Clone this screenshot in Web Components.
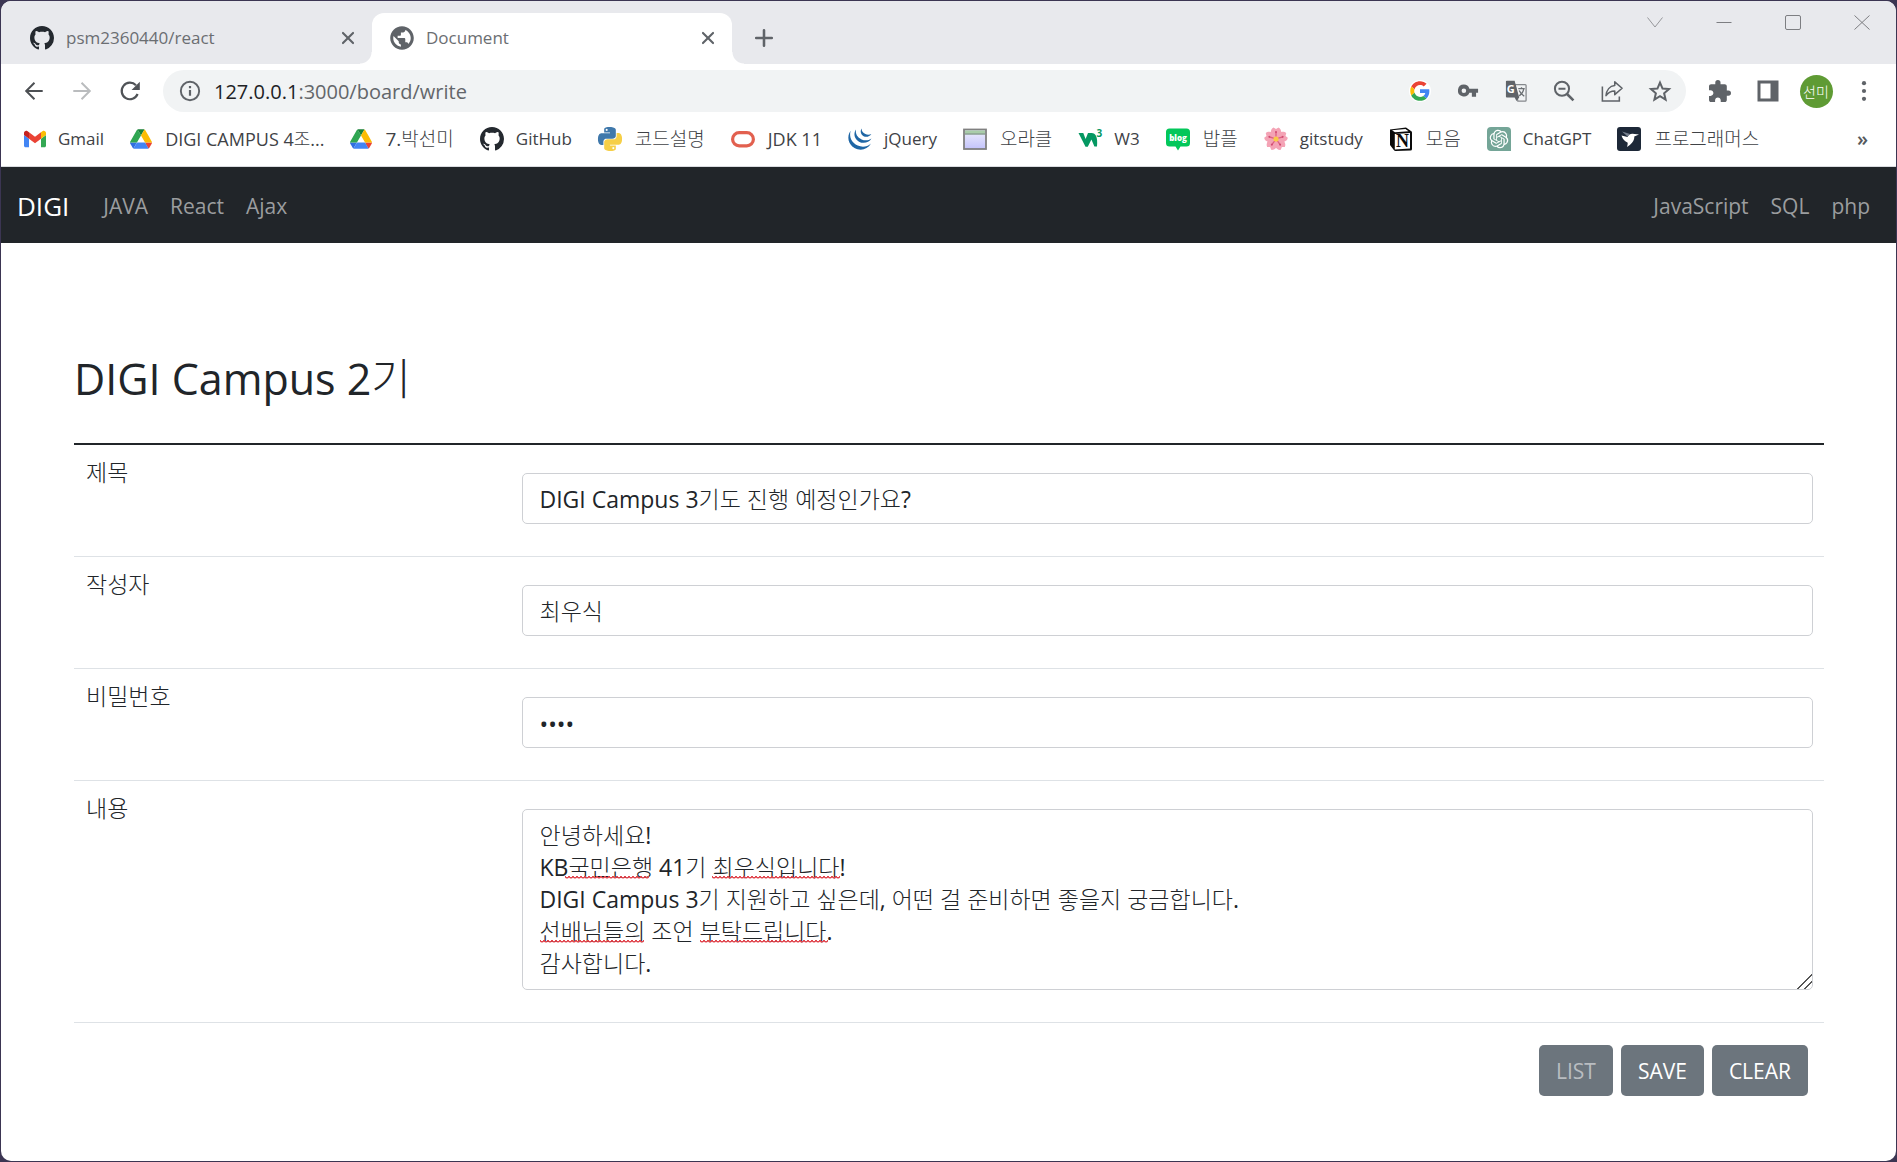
<!DOCTYPE html>
<html lang="ko">
<head>
<meta charset="utf-8">
<title>Document</title>
<style>
  html { height: 100%; background: #3b3552; }
  body {
    margin: 0; min-height: 100%; display: flex; box-sizing: border-box; padding: 1px;
    font-family: "Open Sans", "Noto Sans CJK KR Light", "Noto Sans CJK KR", sans-serif; color: #212529;
  }
</style>
</head>
<body>
<browser-window></browser-window>

<script>
const ICONS = {
  github: ['0 0 16 16', '<path fill="#24292f" d="M8 0C3.58 0 0 3.58 0 8c0 3.54 2.29 6.53 5.47 7.59.4.07.55-.17.55-.38 0-.19-.01-.82-.01-1.49-2.01.37-2.53-.49-2.69-.94-.09-.23-.48-.94-.82-1.13-.28-.15-.68-.52-.01-.53.63-.01 1.08.58 1.23.82.72 1.21 1.87.87 2.33.66.07-.52.28-.87.51-1.07-1.78-.2-3.64-.89-3.64-3.95 0-.87.31-1.59.82-2.15-.08-.2-.36-1.02.08-2.12 0 0 .67-.21 2.2.82.64-.18 1.32-.27 2-.27.68 0 1.36.09 2 .27 1.53-1.04 2.2-.82 2.2-.82.44 1.1.16 1.92.08 2.12.51.56.82 1.27.82 2.15 0 3.07-1.87 3.75-3.65 3.95.29.25.54.73.54 1.48 0 1.07-.01 1.93-.01 2.2 0 .21.15.46.55.38A8.013 8.013 0 0016 8c0-4.42-3.58-8-8-8z"/>'],
  globe: ['1 1 22 22', '<path fill="#5f6368" d="M12 1.200C6 1.200 1.200 6 1.200 12S6 22.800 12 22.800 22.800 18 22.800 12 18 1.200 12 1.200zm-1 18.730c-3.950-.490-7-3.850-7-7.930 0-.620.080-1.210.210-1.790L9 15v1c0 1.100.900 2 2 2v1.930zm6.900-2.540c-.260-.810-1-1.390-1.900-1.390h-1v-3c0-.550-.450-1-1-1H8v-2h2c.550 0 1-.450 1-1V7h2c1.100 0 2-.900 2-2v-.410c2.930 1.190 5 4.060 5 7.410 0 2.080-.800 3.970-2.100 5.390z"/>'],
  close: ['0 0 24 24', '<path stroke="#5f6368" stroke-width="2.300" stroke-linecap="round" d="M6.500 6.500l11 11m0-11l-11 11"/>'],
  plus: ['0 0 24 24', '<path stroke="#5f6368" stroke-width="2.800" stroke-linecap="round" d="M12 3.500v17M3.500 12h17"/>'],
  wdown: ['0 0 24 24', '<path fill="none" stroke="#96979b" d="M4.500 7.500l7.500 9.500 7.500-9.500"/>'],
  wmin: ['0 0 24 24', '<path stroke="#7d7e82" d="M4.500 12.500h15"/>'],
  wmax: ['0 0 24 24', '<rect x="4.500" y="5.500" width="15" height="14" rx="1.500" fill="none" stroke="#7d7e82"/>'],
  wclose: ['0 0 24 24', '<path stroke="#7d7e82" d="M4.500 5.500l15 14m0-14l-15 14"/>'],
  back: ['0 0 24 24', '<path fill="none" stroke="#4d5054" stroke-width="2.200" d="M21.500 12H3.500M12.500 3l-9 9 9 9"/>'],
  forward: ['0 0 24 24', '<path fill="none" stroke="#babcbe" stroke-width="2.200" d="M2.500 12h18M11.500 3l9 9-9 9"/>'],
  reload: ['0 0 24 24', '<path fill="none" stroke="#505357" stroke-width="2.400" d="M20.300 15.300A9 9 0 1 1 18.500 5.800"/><path fill="#505357" d="M22.700 2v9h-9z"/>'],
  info: ['0 0 24 24', '<circle cx="12" cy="12" r="10" fill="none" stroke="#5f6368" stroke-width="2.100"/><path stroke="#5f6368" stroke-width="2.400" d="M12 10.800v6.500M12 6.600v2.400"/>'],
  google: ['-3 -3 54 54', '<circle cx="24" cy="24" r="27" fill="#fff"/><path fill="#EA4335" d="M24 9.500c3.540 0 6.710 1.220 9.210 3.600l6.850-6.850C35.900 2.380 30.470 0 24 0 14.620 0 6.510 5.380 2.560 13.220l7.980 6.190C12.430 13.720 17.740 9.500 24 9.500z"/><path fill="#4285F4" d="M46.980 24.550c0-1.570-.150-3.090-.380-4.550H24v9.020h12.940c-.580 2.960-2.260 5.480-4.780 7.180l7.730 6c4.510-4.180 7.090-10.360 7.090-17.650z"/><path fill="#FBBC05" d="M10.530 28.590c-.480-1.450-.760-2.990-.760-4.590s.270-3.140.760-4.590l-7.980-6.190C.920 16.460 0 20.120 0 24c0 3.880.920 7.540 2.560 10.780l7.970-6.190z"/><path fill="#34A853" d="M24 48c6.480 0 11.930-2.130 15.890-5.810l-7.730-6c-2.150 1.450-4.920 2.300-8.160 2.300-6.260 0-11.570-4.220-13.470-9.910l-7.980 6.190C6.510 42.620 14.620 48 24 48z"/>'],
  key: ['0 0 24 24', '<path fill="#5f6368" fill-rule="evenodd" d="M7.500 5a6.500 6.500 0 1 0 6 9h2.700v4.200h4.600V14H23V9.500h-9.500A6.500 6.500 0 0 0 7.500 5zm0 4.200a2.500 2.500 0 1 1 0 5 2.500 2.500 0 0 1 0-5z"/>'],
  translate: ['0 0 24 24', '<path fill="#f1f3f4" stroke="#85888c" stroke-width="1.400" d="M11 5h11a1 1 0 0 1 1 1v16a1 1 0 0 1-1 1h-8z"/><path fill="#5f6368" d="M2 .700h8.500L15.500 19H2a1 1 0 0 1-1-1V1.700a1 1 0 0 1 1-1zM10.500 19h5l-3 4z"/><text x="2" y="14" fill="#fff" font-family="Open Sans" font-weight="700" font-size="12">G</text><path fill="none" stroke="#6b6f73" stroke-width="1.400" d="M14.500 9.500h7M18 8v1.500M20.500 9.500c-.500 3.500-2.500 6-5 7.800M15.500 11.500c1 2.500 3 4.500 5.500 6.300"/>'],
  zoomout: ['0 0 24 24', '<circle cx="9.800" cy="9.500" r="7.700" fill="none" stroke="#5f6368" stroke-width="2.200"/><path stroke="#5f6368" stroke-width="2.200" d="M6 9.500h7.600"/><path stroke="#5f6368" stroke-width="2.800" d="M15.300 15.300l7 7"/>'],
  share: ['0 0 24 24', '<path fill="none" stroke="#5f6368" stroke-width="1.700" d="M1.500 7v16h18.500v-5"/><path fill="none" stroke="#5f6368" stroke-width="1.700" stroke-linejoin="round" d="M15 2l8 7-8 7v-4c-4.500 0-7 1.500-9.500 5C6 11 9.500 6.500 15 6z"/>'],
  star: ['0 0 24 24', '<path fill="none" stroke="#5f6368" stroke-width="2.200" d="M12 2.800l2.800 6.500 7 .600-5.300 4.600 1.600 6.900-6.100-3.700-6.100 3.700 1.600-6.900L2.200 9.900l7-.600z"/>'],
  puzzle: ['2 1 21 21', '<path fill="#5f6368" d="M20.500 11H19V7c0-1.100-.900-2-2-2h-4V3.500a2.500 2.500 0 0 0-5 0V5H4c-1.100 0-1.990.900-1.990 2v3.800H3.500c1.490 0 2.700 1.210 2.700 2.700s-1.210 2.700-2.700 2.700H2V20c0 1.100.900 2 2 2h3.800v-1.500c0-1.490 1.210-2.700 2.700-2.700 1.490 0 2.700 1.210 2.700 2.700V22H17c1.100 0 2-.900 2-2v-4h1.500a2.500 2.500 0 0 0 0-5z"/>'],
  panel: ['0 0 24 24', '<path fill="#5f6368" fill-rule="evenodd" d="M1.500 1.500h21v21h-21zM4.500 4.500v15h10v-15z"/>'],
  dots: ['0 0 24 24', '<g fill="#5f6368"><circle cx="12" cy="3.500" r="2.300"/><circle cx="12" cy="12" r="2.300"/><circle cx="12" cy="20.500" r="2.300"/></g>'],
  gmail: ['52 42 88 66', '<path fill="#4285f4" d="M58 108h14V74L52 59v43c0 3.320 2.690 6 6 6"/><path fill="#34a853" d="M120 108h14c3.320 0 6-2.690 6-6V59l-20 15"/><path fill="#fbbc04" d="M120 48v26l20-15v-8c0-7.420-8.470-11.650-14.400-7.200"/><path fill="#ea4335" d="M72 74V48l24 18 24-18v26L96 92"/><path fill="#c5221f" d="M52 51v8l20 15V48l-5.600-4.200c-5.940-4.450-14.400-.220-14.400 7.200"/>'],
  drive: ['0 0 87.300 78', '<path d="m6.600 66.850 3.850 6.650c.800 1.400 1.950 2.500 3.300 3.300l13.750-23.800H0c0 1.550.400 3.100 1.200 4.500z" fill="#2f6fe0"/><path d="m43.650 25-13.750-23.800c-1.350.800-2.500 1.900-3.300 3.300L1.200 48.500A9 9 0 0 0 0 53h27.500z" fill="#2fa652"/><path d="m73.550 76.800c1.350-.800 2.500-1.900 3.300-3.300l1.600-2.750 7.650-13.250c.800-1.400 1.200-2.950 1.200-4.500H59.800l5.850 11.500z" fill="#ea4335"/><path d="M43.650 25 57.400 1.200C56.050.400 54.500 0 52.900 0H34.400c-1.600 0-3.150.450-4.500 1.200z" fill="#188038"/><path d="M59.800 53H27.500L13.750 76.800c1.350.800 2.900 1.200 4.500 1.200h50.800c1.600 0 3.150-.450 4.500-1.200z" fill="#4285f4"/><path d="m73.400 26.500-12.700-22c-.800-1.400-1.950-2.500-3.300-3.300L43.650 25l16.150 28h27.450c0-1.550-.400-3.100-1.200-4.500z" fill="#fbbc04"/>'],
  python: ['0 0 24 24', '<path fill="#3f78ab" d="M14.250.18l.9.2.73.26.59.3.45.32.34.34.25.34.16.33.1.3.04.26.02.2-.01.13V8.500l-.05.63-.13.55-.21.46-.26.38-.3.31-.33.25-.35.19-.35.14-.33.1-.3.07-.26.04-.21.02H8.770l-.69.05-.59.14-.5.22-.41.27-.33.32-.27.35-.2.36-.15.37-.1.35-.07.32-.04.27-.02.21v3.060H3.170l-.21-.03-.28-.07-.32-.12-.35-.18-.36-.26-.36-.36-.35-.46-.32-.59-.28-.73-.21-.88-.14-1.050-.05-1.230.06-1.220.16-1.040.24-.87.32-.71.36-.57.4-.44.42-.33.42-.24.4-.16.36-.1.32-.05.24-.01h.16l.06.01h8.160v-.83H6.180l-.01-2.750-.02-.37.05-.34.11-.31.17-.28.25-.26.31-.23.38-.2.44-.18.51-.15.58-.12.64-.1.71-.06.77-.04.84-.02 1.270.05zm-6.300 1.980l-.23.33-.08.41.08.41.23.34.33.22.41.09.41-.09.33-.22.23-.34.08-.41-.08-.41-.23-.33-.33-.22-.41-.09-.41.09z"/><path fill="#f6cf47" d="M21.040 6.110l.28.06.32.12.35.18.36.27.36.35.35.47.32.59.28.73.21.88.14 1.040.05 1.230-.06 1.230-.16 1.040-.24.86-.32.71-.36.57-.4.45-.42.33-.42.24-.4.16-.36.09-.32.05-.24.02-.16-.01h-8.220v.82h5.840l.01 2.760.02.36-.05.34-.11.31-.17.29-.25.25-.31.24-.38.2-.44.17-.51.15-.58.13-.64.09-.71.07-.77.04-.84.01-1.270-.04-1.070-.14-.9-.2-.73-.25-.59-.3-.45-.33-.34-.34-.25-.34-.16-.33-.1-.3-.04-.25-.02-.2.01-.13v-5.340l.05-.64.13-.54.21-.46.26-.38.3-.32.33-.24.35-.2.35-.14.33-.1.3-.06.26-.04.21-.02.13-.01h5.840l.69-.05.59-.14.5-.21.41-.28.33-.32.27-.35.2-.36.15-.36.1-.35.07-.32.04-.28.02-.21V6.070h2.090l.14.01zM14.570 20.360l-.23.33-.08.41.08.41.23.33.33.23.41.08.41-.08.33-.23.23-.33.08-.41-.08-.41-.23-.33-.33-.23-.41-.08-.41.08z"/>'],
  oracle: ['0 0 24 24', '<rect x="1.600" y="5.600" width="20.800" height="13.300" rx="6.600" fill="none" stroke="#e2604f" stroke-width="3.200"/>'],
  jquery: ['0 0 24 24', '<g fill="#1f66a5"><path d="M2.600 3.800C-1.500 9.500.200 17.500 6.500 21c6 3.300 13 1.600 16.500-4.500-4 3.500-8.800 4-13.300 2C4 16 .800 10.500 2.600 3.800z"/><path d="M8 2.500c-3 4-1.500 9.700 3 12.200 4.300 2.300 9.800 1.200 12.500-3.200-3.200 2.200-6.700 2.300-9.900.900C9.500 10.500 7.200 7 8 2.500z"/><path d="M13.600 1.500c-1.800 2.700-.700 6.300 2 7.700 2.700 1.300 6 .500 7.800-2.200-2 1-4.100 1-6 .100-2.500-1.100-3.900-3.100-3.800-5.600z"/></g>'],
  appwin: ['0 0 24 24', '<defs><linearGradient id="w" x2="0" y2="1"><stop stop-color="#efeffc"/><stop offset="1" stop-color="#c3c3fb"/></linearGradient></defs><rect x="1" y="2.500" width="22" height="19.500" fill="url(#w)" stroke="#808080" stroke-width="1.800"/><path fill="#a9cda9" d="M2 3.500h20v3H2z"/><path stroke="#5f7f5f" stroke-width="1.200" d="M2 7h20"/>'],
  w3: ['0 0 24 24', '<path fill="#059862" d="M.500 6h4.800l2.300 6L10 6h3.600c4 0 6.400 4 5.400 13.500h-2.600l-3-7-3.600 7.300H7.500z"/><text x="18.500" y="10" fill="#059862" font-family="Open Sans" font-weight="700" font-size="10">3</text>'],
  blog: ['0 0 24 24', '<path fill="#03c75a" d="M3.500 1.500h17A3.500 3.500 0 0 1 24 5v11a3.500 3.500 0 0 1-3.500 3.500h-6L12 23.500l-2.500-4h-6A3.500 3.500 0 0 1 0 16V5a3.500 3.500 0 0 1 3.500-3.500z"/><text x="12" y="13.500" text-anchor="middle" fill="#fff" font-family="Open Sans" font-weight="800" font-size="8">blog</text>'],
  flower: ['-12 -12 24 24', [0,72,144,216,288].map(a => `<g transform="rotate(${a})"><path fill="#f4a3b5" d="M0 0C-7-3-6-10-2.500-11.600L0-10l2.500-1.600C6-10 7-3 0 0z"/><path stroke="#dd5f80" stroke-width="1.300" d="M0-2v-5"/><circle cy="-7" r="1" fill="#d04a70"/></g>`).join('') + '<circle r="2.600" fill="#f8c948"/>'],
  notion: ['0 0 24 24', '<path fill="#0b0b0b" d="M1 2.500L17 .500l5 3.500a2 2 0 0 1 1 1.500V22a1.500 1.500 0 0 1-1.500 1.500L6.500 24a2 2 0 0 1-1.500-.800L1 18z"/><path fill="#fff" d="M3 3.300l13.500-1.300 3 2.200L6 5.200zM5.800 7L21 6v15.500l-15.200 1z"/><text x="13.500" y="20.300" text-anchor="middle" fill="#0b0b0b" font-family="Liberation Serif" font-weight="700" font-size="18">N</text>'],
  gpt: ['0 0 24 24', '<path fill="#74a597" d="M4 0h16a4 4 0 0 1 4 4v20H4a4 4 0 0 1-4-4V4a4 4 0 0 1 4-4z"/><path fill="#fff" transform="translate(2.700 2.700) scale(.775)" d="M22.282 9.821a5.985 5.985 0 0 0-.516-4.911 6.046 6.046 0 0 0-6.510-2.900A6.065 6.065 0 0 0 4.981 4.182a5.985 5.985 0 0 0-3.998 2.900 6.046 6.046 0 0 0 .743 7.097 5.980 5.980 0 0 0 .511 4.911 6.051 6.051 0 0 0 6.515 2.900A5.985 5.985 0 0 0 13.260 24a6.056 6.056 0 0 0 5.772-4.206 5.989 5.989 0 0 0 3.998-2.900 6.056 6.056 0 0 0-.748-7.073zm-9.022 12.608a4.476 4.476 0 0 1-2.876-1.041l.142-.080 4.778-2.758a.795.795 0 0 0 .393-.681v-6.737l2.020 1.169a.071.071 0 0 1 .038.052v5.583a4.504 4.504 0 0 1-4.495 4.494zm-9.661-4.125a4.471 4.471 0 0 1-.535-3.014l.142.085 4.783 2.758a.771.771 0 0 0 .781 0l5.843-3.369v2.332a.080.080 0 0 1-.033.062L9.740 19.950a4.499 4.499 0 0 1-6.141-1.646zM2.341 7.896a4.485 4.485 0 0 1 2.366-1.973V11.600a.766.766 0 0 0 .388.677l5.814 3.354-2.020 1.169a.076.076 0 0 1-.071 0l-4.830-2.787A4.504 4.504 0 0 1 2.341 7.872zm16.596 3.856L13.104 8.364 15.119 7.200a.076.076 0 0 1 .071 0l4.830 2.791a4.494 4.494 0 0 1-.677 8.104v-5.677a.790.790 0 0 0-.407-.667zm2.011-3.023l-.142-.085-4.774-2.782a.776.776 0 0 0-.785 0L9.409 9.230V6.897a.066.066 0 0 1 .028-.062l4.830-2.787a4.499 4.499 0 0 1 6.680 4.660zM8.307 12.863l-2.020-1.164a.080.080 0 0 1-.038-.057V6.074a4.499 4.499 0 0 1 7.376-3.454l-.142.081L8.704 5.459a.795.795 0 0 0-.393.681zm1.098-2.365l2.602-1.500 2.607 1.500v2.999l-2.597 1.500-2.607-1.500Z"/>'],
  bird: ['0 0 24 24', '<rect width="24" height="24" rx="3" fill="#1d2838"/><path fill="#fff" d="M4.500 8.500l6 1.500c1-2.200 3-3.300 5-3.200L22 7.500l-4.700 2c.200 5-3.300 7.700-7.300 10.500.800-2.500.800-3.700.500-4.500-2.500-1-5-3.500-6-7z"/><path fill="#76808f" d="M5 4.500l8 2.500-2.500 2.500z"/>']
};

class AppIcon extends HTMLElement {
  connectedCallback() {
    const [box, body] = ICONS[this.getAttribute('name')];
    this.attachShadow({ mode: 'open' }).innerHTML = `
      <style>:host{display:inline-flex;flex:none;width:24px;height:24px}
      :host([small]){width:22px;height:22px}
      svg{width:100%;height:100%;display:block;overflow:visible}</style>
      <svg viewBox="${box}" fill="none" aria-hidden="true">${body}</svg>`;
  }
}

class IconButton extends HTMLElement {
  connectedCallback() {
    const icon = this.getAttribute('icon');
    const size = this.hasAttribute('small') ? 'small' : '';
    this.attachShadow({ mode: 'open' }).innerHTML = `
      <style>
        :host{display:flex;flex:none;width:48px;justify-content:center}
        :host([wide]){width:69px}
        :host([slim]){width:24px}
        button{border:0;background:none;padding:0;display:flex;font:inherit;color:inherit}
      </style>
      <button aria-label="${this.getAttribute('label')}">${icon ? `<app-icon ${size} name="${icon}"></app-icon>` : '<slot></slot>'}</button>`;
  }
}

class BrowserTab extends HTMLElement {
  connectedCallback() {
    this.attachShadow({ mode: 'open' }).innerHTML = `
      <style>
        :host{display:flex;align-items:center;box-sizing:border-box;width:360px;height:51px;padding:0 12px 2px 18px;
          gap:12px;font-size:17px;color:#6b6e72;position:relative;border-radius:12px 12px 0 0}
        :host([active]){background:#fff}
        :host([active])::before,:host([active])::after{content:"";position:absolute;bottom:0;width:12px;height:12px}
        :host([active])::before{right:100%;background:radial-gradient(circle at 0 0,transparent 11px,#fff 12px)}
        :host([active])::after{left:100%;background:radial-gradient(circle at 100% 0,transparent 11px,#fff 12px)}
        span{flex:1}
      </style>
      <app-icon name="${this.getAttribute('icon')}"></app-icon><span><slot></slot></span>
      <icon-button slim small icon="close" label="탭 닫기"></icon-button>`;
  }
}

class TabStrip extends HTMLElement {
  connectedCallback() {
    this.attachShadow({ mode: 'open' }).innerHTML = `
      <style>
        :host{display:flex;align-items:flex-end;height:63px;background:#e8e9ed;padding-left:11px}
        .new{height:49px;display:flex;align-items:center;align-self:flex-end;padding:0 0 2px 8px}
        .win{margin-left:auto;display:flex;align-self:flex-start;padding-top:9px}
      </style>
      <browser-tab icon="github">psm2360440/react</browser-tab>
      <browser-tab icon="globe" active>Document</browser-tab>
      <div class="new"><icon-button small icon="plus" label="새 탭"></icon-button></div>
      <div class="win">
        <icon-button wide icon="wdown" label="탭 검색"></icon-button>
        <icon-button wide icon="wmin" label="최소화"></icon-button>
        <icon-button wide icon="wmax" label="최대화"></icon-button>
        <icon-button wide icon="wclose" label="닫기"></icon-button>
      </div>`;
  }
}

class AddressBar extends HTMLElement {
  connectedCallback() {
    this.attachShadow({ mode: 'open' }).innerHTML = `
      <style>
        :host{display:flex;align-items:center;padding:6px 8px 0 9px}
        .omni{flex:1;display:flex;align-items:center;height:42px;border-radius:21px;background:#f1f3f4;
          margin-left:9px;margin-right:10px;padding-left:3px;padding-right:2px}
        .url{flex:1;font-size:20px;color:#63666a}
        .url b{font-weight:400;color:#202124}
        .me{width:33px;height:33px;border-radius:50%;background:#5f9b34;color:#fff;font-size:14px;
          display:flex;align-items:center;justify-content:center}
      </style>
      <icon-button small icon="back" label="뒤로"></icon-button>
      <icon-button small icon="forward" label="앞으로"></icon-button>
      <icon-button small icon="reload" label="새로고침"></icon-button>
      <div class="omni">
        <icon-button small icon="info" label="사이트 정보"></icon-button>
        <span class="url"><b>127.0.0.1</b>:3000/board/write</span>
        <icon-button small icon="google" label="Google"></icon-button>
        <icon-button small icon="key" label="비밀번호 관리"></icon-button>
        <icon-button small icon="translate" label="번역"></icon-button>
        <icon-button small icon="zoomout" label="축소"></icon-button>
        <icon-button small icon="share" label="공유"></icon-button>
        <icon-button small icon="star" label="북마크"></icon-button>
      </div>
      <icon-button small icon="puzzle" label="확장 프로그램"></icon-button>
      <icon-button icon="panel" label="측면 패널"></icon-button>
      <icon-button label="프로필"><span class="me">선미</span></icon-button>
      <icon-button small icon="dots" label="메뉴"></icon-button>`;
  }
}

class BookmarkLink extends HTMLElement {
  connectedCallback() {
    this.attachShadow({ mode: 'open' }).innerHTML = `
      <style>
        :host{display:flex;flex:none}
        a{display:flex;align-items:center;gap:12px;color:#404246;text-decoration:none;font-size:17px;line-height:24px;white-space:nowrap}
        :host([mixed]) a{font-size:18px;gap:13px}
        :host([ko]) a{font-size:19px;gap:13px}
      </style>
      <a href="#"><app-icon ${this.hasAttribute('small') ? 'small' : ''} name="${this.getAttribute('icon')}"></app-icon><slot></slot></a>`;
  }
}

class BookmarkBar extends HTMLElement {
  connectedCallback() {
    this.attachShadow({ mode: 'open' }).innerHTML = `
      <style>
        :host{display:flex;align-items:center;height:54px;padding:0 28px 0 23px;gap:26px;border-bottom:1px solid #dadce0}
        button{margin-left:auto;border:0;background:none;padding:0;font:600 20px/24px "Open Sans",sans-serif;color:#55585c}
      </style>
      <bookmark-link small icon="gmail">Gmail</bookmark-link>
      <bookmark-link mixed small icon="drive">DIGI CAMPUS 4조...</bookmark-link>
      <bookmark-link ko small icon="drive">7.박선미</bookmark-link>
      <bookmark-link icon="github">GitHub</bookmark-link>
      <bookmark-link ko icon="python">코드설명</bookmark-link>
      <bookmark-link mixed icon="oracle">JDK 11</bookmark-link>
      <bookmark-link icon="jquery">jQuery</bookmark-link>
      <bookmark-link ko icon="appwin">오라클</bookmark-link>
      <bookmark-link icon="w3">W3</bookmark-link>
      <bookmark-link ko icon="blog">밥플</bookmark-link>
      <bookmark-link icon="flower">gitstudy</bookmark-link>
      <bookmark-link ko icon="notion">모음</bookmark-link>
      <bookmark-link icon="gpt">ChatGPT</bookmark-link>
      <bookmark-link ko icon="bird">프로그래머스</bookmark-link>
      <button aria-label="북마크 더보기">»</button>`;
  }
}

class SiteNav extends HTMLElement {
  connectedCallback() {
    this.attachShadow({ mode: 'open' }).innerHTML = `
      <style>
        :host{display:block;background:#212529}
        nav{display:flex;align-items:center;height:74px;padding:2px 15px 0 16px;font-size:21px}
        a{color:#9b9d9f;text-decoration:none;padding:0 11px}
        .brand{color:#fff;font-size:26px;padding:0;margin-right:23px}
        .right{margin-left:auto;display:flex}
      </style>
      <nav><a class="brand" href="#">DIGI</a><a href="#">JAVA</a><a href="#">React</a><a href="#">Ajax</a>
      <div class="right"><a href="#">JavaScript</a><a href="#">SQL</a><a href="#">php</a></div></nav>`;
  }
}

class FormRow extends HTMLElement {
  connectedCallback() {
    const type = this.getAttribute('type') || 'text';
    const text = this.textContent.trim();
    const control = type === 'textarea'
      ? `<textarea id="c" rows="5" spellcheck="false">${text}</textarea>
         <i style="left:43px;top:66px;width:84px"></i><i style="left:190px;top:66px;width:128px"></i>
         <i style="left:18px;top:130px;width:104px"></i><i style="left:178px;top:130px;width:128px"></i>`
      : `<input id="c" type="${type}" value="${text}" autocomplete="off">`;
    this.attachShadow({ mode: 'open' }).innerHTML = `
      <style>
        :host{display:grid;grid-template-columns:1fr 3fr;border-bottom:1px solid #dee2e6;font-size:23px;line-height:32px}
        label{padding:11px 12px}
        .cell{padding:28px 11px 32px 10px}
        .box{position:relative;display:flex}
        input,textarea{flex:1;min-width:0;box-sizing:border-box;margin:0;border:1px solid #ced0d4;border-radius:5px;background:#fff;
          padding:8px 17px;font:inherit;color:#212529;outline:0;display:block}
        input{height:51px;padding-bottom:10px}
        input[type=password]{padding:10px 17px 8px}
        textarea{height:181px;padding-top:9px;resize:vertical;overflow:hidden}
        textarea::-webkit-resizer{background:linear-gradient(135deg,transparent 48%,#555 48% 54%,transparent 54% 72%,#555 72% 78%,transparent 78%)}
        i{position:absolute;height:4px;background:
          radial-gradient(circle at 2px 0,transparent 1px,#e0444c 1px 2px,transparent 3px) 0 1px/4px 3px repeat-x}
      </style>
      <label for="c">${this.getAttribute('label')}</label>
      <div class="cell"><div class="box">${control}</div></div>`;
  }
}

class ActionButton extends HTMLElement {
  connectedCallback() {
    this.attachShadow({ mode: 'open' }).innerHTML = `
      <style>:host{display:flex}
        button{height:51px;padding:0 17px;border:0;border-radius:5px;background:#6c757d;color:#fff;font:inherit}
        :host([dim]) button{color:#b9bdc1}</style>
      <button type="button"><slot></slot></button>`;
  }
}

class WritePage extends HTMLElement {
  connectedCallback() {
    this.attachShadow({ mode: 'open' }).innerHTML = `
      <style>
        :host{display:block;padding:107px 72px 64px 73px}
        h2{margin:0 0 35px;font-size:43px;line-height:58px;font-weight:400}
        form{border-top:2px solid #212529}
        .actions{display:flex;justify-content:flex-end;gap:8px;padding:22px 16px 0;font-size:21px}
      </style>
      <h2>DIGI Campus 2기</h2>
      <form>
        <form-row label="제목">DIGI Campus 3기도 진행 예정인가요?</form-row>
        <form-row label="작성자">최우식</form-row>
        <form-row label="비밀번호" type="password">1234</form-row>
        <form-row label="내용" type="textarea">안녕하세요!
KB국민은행 41기 최우식입니다!
DIGI Campus 3기 지원하고 싶은데, 어떤 걸 준비하면 좋을지 궁금합니다.
선배님들의 조언 부탁드립니다.
감사합니다.</form-row>
        <div class="actions"><action-button dim>LIST</action-button><action-button>SAVE</action-button><action-button>CLEAR</action-button></div>
      </form>`;
  }
}

class BrowserWindow extends HTMLElement {
  connectedCallback() {
    this.attachShadow({ mode: 'open' }).innerHTML = `
      <style>:host{display:block;flex:1;min-width:0;background:#fff;border-radius:10px;overflow:hidden}</style>
      <tab-strip></tab-strip><address-bar></address-bar><bookmark-bar></bookmark-bar><site-nav></site-nav><write-page></write-page>`;
  }
}

customElements.define('app-icon', AppIcon);
customElements.define('icon-button', IconButton);
customElements.define('browser-tab', BrowserTab);
customElements.define('tab-strip', TabStrip);
customElements.define('address-bar', AddressBar);
customElements.define('bookmark-link', BookmarkLink);
customElements.define('bookmark-bar', BookmarkBar);
customElements.define('site-nav', SiteNav);
customElements.define('form-row', FormRow);
customElements.define('action-button', ActionButton);
customElements.define('write-page', WritePage);
customElements.define('browser-window', BrowserWindow);
</script>
</body>
</html>
